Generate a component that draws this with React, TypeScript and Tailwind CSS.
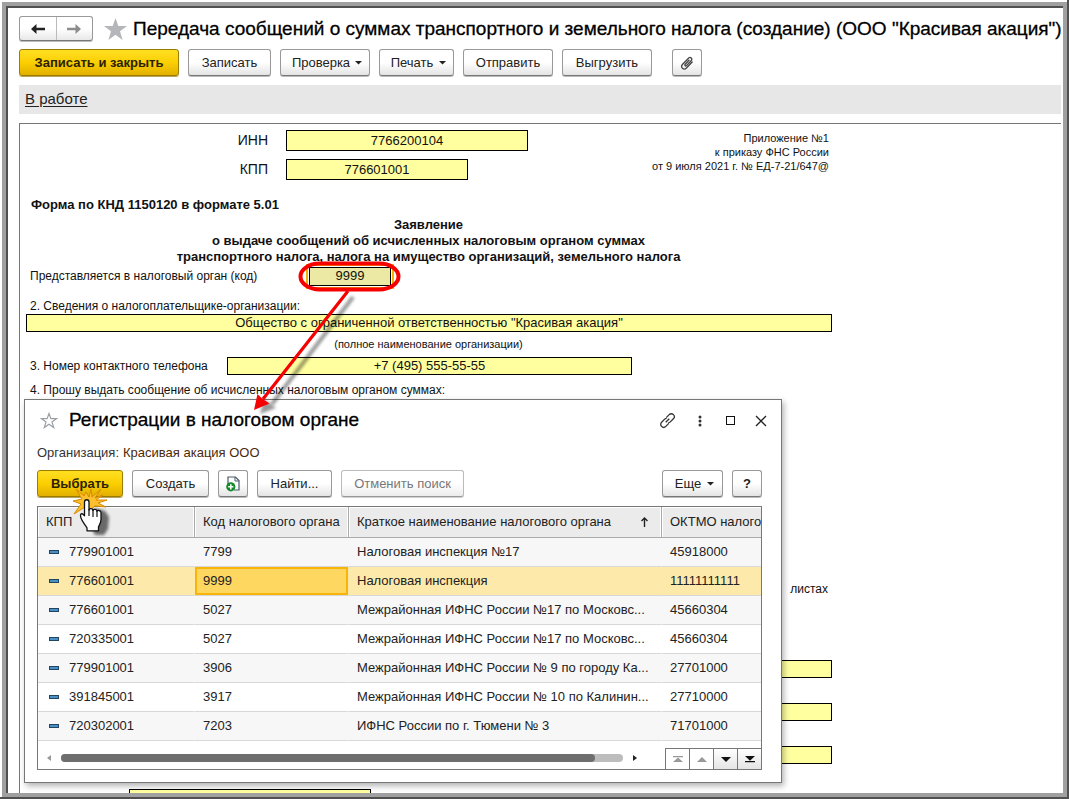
import React from "react";

type Row = { kpp: string; code: string; name: string; oktmo: string };

const rows: Row[] = [
  { kpp: "779901001", code: "7799", name: "Налоговая инспекция №17", oktmo: "45918000" },
  { kpp: "776601001", code: "9999", name: "Налоговая инспекция", oktmo: "11111111111" },
  { kpp: "776601001", code: "5027", name: "Межрайонная ИФНС России №17 по Московс...", oktmo: "45660304" },
  { kpp: "720335001", code: "5027", name: "Межрайонная ИФНС России №17 по Московс...", oktmo: "45660304" },
  { kpp: "779901001", code: "3906", name: "Межрайонная ИФНС России № 9 по городу Ка...", oktmo: "27701000" },
  { kpp: "391845001", code: "3917", name: "Межрайонная ИФНС России № 10 по Калинин...", oktmo: "27710000" },
  { kpp: "720302001", code: "7203", name: "ИФНС России по г. Тюмени № 3", oktmo: "71701000" },
];

const SELECTED = 1;

const buttonBase =
  "flex h-[27px] shrink-0 items-center justify-center whitespace-nowrap rounded-[3px] border text-[13px] ";
const plain =
  "border-[#999] border-b-[#777] bg-linear-to-b from-white from-50% to-[#e4e4e4] text-[#222] shadow-[0_1px_0_#bbb] ";
const primary =
  "border-[#9a7d00] bg-linear-to-b from-[#ffdf20] via-[#fbcf00] to-[#e2b000] font-bold text-[#2b2200] shadow-[0_1px_0_#b9a45a] ";

function Caret() {
  return (
    <svg width="7" height="4" viewBox="0 0 7 4" aria-hidden="true">
      <path d="M0 0h7L3.5 3.5z" fill="#222" />
    </svg>
  );
}

function Btn({
  className,
  kind = "plain",
  children,
  label,
  disabled,
}: {
  className: string;
  kind?: "plain" | "primary" | "disabled";
  children: React.ReactNode;
  label?: string;
  disabled?: boolean;
}) {
  const look =
    kind === "primary"
      ? primary
      : kind === "disabled"
        ? "border-[#bbb] border-b-[#999] bg-linear-to-b from-white from-50% to-[#ececec] text-[#777] shadow-[0_1px_0_#d0d0d0] "
        : plain;
  return (
    <button type="button" aria-label={label} disabled={disabled} className={buttonBase + look + className}>
      {children}
    </button>
  );
}

const field = "border border-black bg-[#ffffa0] text-center text-[13px] text-[#111] outline-none ";

function Heading() {
  return (
    <header className="flex h-[41px] items-center pl-[11px]">
      <div className="flex h-[25px] w-[74px] shrink-0 rounded-[3px] border border-[#999] border-b-[#777] bg-linear-to-b from-white from-50% to-[#e8e8e8] shadow-[0_1px_0_#bbb]">
        <button type="button" aria-label="Назад" className="flex flex-1 items-center justify-center border-r border-[#bbb]">
          <svg width="14" height="12" viewBox="0 0 14 12">
            <path d="M0 6 5.500 1v3.500L4 6l1.500 1.500V11zM3 4.800h11v2.400H3z" fill="#222" />
          </svg>
        </button>
        <button type="button" aria-label="Вперёд" className="flex flex-1 items-center justify-center">
          <svg width="14" height="12" viewBox="0 0 14 12">
            <path d="M14 6 8.500 1v3.500L10 6 8.500 7.500V11zM11 4.800H0v2.400h11z" fill="#8c8c8c" />
          </svg>
        </button>
      </div>
      <button type="button" aria-label="В избранное" className="ml-[11px] shrink-0">
        <svg width="23" height="22" viewBox="0 0 23 22">
          <path d="M11.500 0l2.800 8H23l-7 5.200L18.600 22l-7.100-5.300L4.400 22 7 13.200 0 8h8.700z" fill="#b4b6b9" />
        </svg>
      </button>
      <h1 className="ml-[6px] whitespace-nowrap text-[19px] leading-6 text-black [-webkit-text-stroke:0.3px_#000]">
        Передача сообщений о суммах транспортного и земельного налога (создание) (ООО "Красивая акация")
      </h1>
    </header>
  );
}

function Toolbar() {
  return (
    <div className="flex h-[35px] items-start gap-[9px] pl-[11px]">
      <Btn kind="primary" className="w-[160px]">Записать и закрыть</Btn>
      <Btn className="w-[83px]">Записать</Btn>
      <Btn className="w-[90px] gap-[5px] pl-1">Проверка <Caret /></Btn>
      <Btn className="w-[75px] gap-[6px] pl-1">Печать <Caret /></Btn>
      <Btn className="w-[90px]">Отправить</Btn>
      <Btn className="w-[90px]">Выгрузить</Btn>
      <Btn className="ml-[11px] w-[30px]" label="Прикреплённые файлы">
        <svg width="14" height="14" viewBox="0 0 14 14" fill="none" stroke="#444" strokeWidth="1.300" strokeLinecap="round">
          <path d="M9 4.200 5.200 8.300c-.9 1 .4 2.200 1.300 1.300l4.600-4.900c1.800-2-.7-4.400-2.600-2.500L2.600 8.300c-2.600 2.900 1 6.500 3.900 3.700l5.700-6" />
        </svg>
      </Btn>
    </div>
  );
}

function Sheet() {
  return (
    <section className="ml-[11px] mr-[2px] mt-[9px] min-h-0 flex-1 overflow-hidden border-l border-t border-[#777] text-[12px] text-[#111]">
      <div className="w-[812px]">
        <div className="flex h-[70px] justify-between pt-[6px]">
          <div className="flex flex-col gap-2">
            <div className="flex items-center">
              <label htmlFor="inn" className="w-[266px] pr-[18px] text-right text-[14px]">ИНН</label>
              <input id="inn" className={field + "h-[21px] w-[242px]"} defaultValue="7766200104" />
            </div>
            <div className="flex items-center">
              <label htmlFor="kpp" className="w-[266px] pr-[18px] text-right text-[14px]">КПП</label>
              <input id="kpp" className={field + "h-[21px] w-[182px]"} defaultValue="776601001" />
            </div>
          </div>
          <p className="pr-[3px] pt-px text-right text-[11px] leading-[14px]">
            Приложение №1<br />к приказу ФНС России<br />от 9 июля 2021 г. № ЕД-7-21/647@
          </p>
        </div>
        <p className="pl-[11px] pt-[3px] text-[13px] font-bold leading-4">Форма по КНД 1150120 в формате 5.01</p>
        <h2 className="pl-[5px] pt-1 text-center text-[13px] font-bold leading-4">
          Заявление<br />о выдаче сообщений об исчисленных налоговым органом суммах<br />
          транспортного налога, налога на имущество организаций, земельного налога
        </h2>
        <div className="flex h-[22px] items-center pl-[10px]">
          <label htmlFor="code" className="w-[276px]">Представляется в налоговый орган (код)</label>
          <span className="flex border-2 border-[#f7b100] p-px">
            <input id="code" className="h-[19px] w-[82px] border border-black bg-[#ebe9a4] text-center text-[13px] outline-none" defaultValue="9999" />
          </span>
        </div>
        <div className="flex h-[27px] items-end pl-[10px]">
          <label htmlFor="org" className="leading-4">2. Сведения о налогоплательщике-организации:</label>
        </div>
        <div className="pl-[6px]">
          <input id="org" className={field + "block h-[18px] w-full"} defaultValue={'Общество с ограниченной ответственностью "Красивая акация"'} />
        </div>
        <p className="py-1 pl-[5px] text-center text-[11px] leading-4">(полное наименование организации)</p>
        <div className="flex h-5 items-center pl-[10px]">
          <label htmlFor="phone" className="w-[197px]">3. Номер контактного телефона</label>
          <input id="phone" className={field + "h-[18px] w-[405px]"} defaultValue="+7 (495) 555-55-55" />
        </div>
        <p className="pl-[10px] pt-[6px] leading-4">4. Прошу выдать сообщение об исчисленных налоговым органом суммах:</p>
        <p className="mt-[183px] pr-1 text-right leading-4">листах</p>
        <div className="mt-[63px] flex flex-col gap-[25px]">
          <input aria-label="Фамилия" className={field + "h-[18px] w-[242px] self-end"} />
          <input aria-label="Имя" className={field + "h-[18px] w-[242px] self-end"} />
          <input aria-label="Отчество" className={field + "h-[18px] w-[242px] self-end"} />
          <input aria-label="Дата" className={field + "ml-[109px] h-[18px] w-[242px]"} />
        </div>
      </div>
    </section>
  );
}

const th = "border-b border-r border-[#aaa] px-2 text-left font-normal shadow-[inset_1px_1px_0_#fff,inset_-1px_0_0_#fff]";

function RegistryTable() {
  return (
    <div className="mt-[9px] border border-[#777]">
      <div className="overflow-hidden">
        <table className="w-[760px] table-fixed border-separate border-spacing-0 text-[13px] text-[#222]">
          <colgroup>
            <col className="w-[157px]" />
            <col className="w-[154px]" />
            <col className="w-[313px]" />
            <col />
          </colgroup>
          <thead className="bg-[#ebebeb]">
            <tr className="h-[31px] whitespace-nowrap">
              <th className={th}>КПП</th>
              <th className={th}>Код налогового органа</th>
              <th className={th}>
                <span className="flex items-center justify-between pr-1">
                  Краткое наименование налогового органа
                  <svg width="9" height="10" viewBox="0 0 9 10" aria-label="По возрастанию">
                    <path d="M4.500 10V1M1.500 4l3-3 3 3" fill="none" stroke="#222" strokeWidth="1.400" />
                  </svg>
                </span>
              </th>
              <th className={th}>ОКТМО налого</th>
            </tr>
          </thead>
          <tbody>
            {rows.map((r, i) => {
              const sel = i === SELECTED;
              const cell = "truncate border-b border-r border-b-[#d8d8d8] border-r-transparent px-2 ";
              return (
                <tr
                  key={i}
                  className={"h-[29px] " + (sel ? "bg-[#fdeaab]" : i % 2 === 0 ? "bg-[#f7f7f7]" : "bg-white")}
                >
                  <td className={cell}>
                    <span className="flex items-center gap-[10px] pl-[3px]">
                      <svg width="10" height="4" viewBox="0 0 10 4" aria-hidden="true">
                        <rect x=".5" y=".5" width="9" height="3" fill="#4a90c4" stroke="#1f4560" />
                      </svg>
                      {r.kpp}
                    </span>
                  </td>
                  <td className={cell + (sel ? "bg-[#fdd75f] bg-clip-padding shadow-[inset_0_0_0_2px_#f8b408]" : "")}>{r.code}</td>
                  <td className={cell}>{r.name}</td>
                  <td className={cell}>{r.oktmo}</td>
                </tr>
              );
            })}
          </tbody>
        </table>
      </div>
      <div className="flex h-[28px]">
        <div className="flex flex-1 items-center pt-[6px]">
          <button type="button" aria-label="Влево" className="w-[23px] pl-[9px]">
            <svg width="4" height="6" viewBox="0 0 4 6"><path d="M4 0v6L0 3z" fill="#999" /></svg>
          </button>
          <div className="h-2 flex-1 rounded-full bg-[#bdbdbd]">
            <div className="h-2 w-[95%] rounded-full bg-[#6e6e6e]" />
          </div>
          <button type="button" aria-label="Вправо" className="w-[42px] pl-[10px]">
            <svg width="4" height="6" viewBox="0 0 4 6"><path d="M0 0v6l4-3z" fill="#222" /></svg>
          </button>
        </div>
        <div className="flex h-[21px] self-end border-t border-[#777]">
          {[
            { label: "В начало", d: "M0 0h10v1.200H0zM5 1.500l5 4.500H0z", on: false },
            { label: "Вверх", d: "M5 1l5 5H0z", on: false },
            { label: "Вниз", d: "M0 1h10L5 6z", on: true },
            { label: "В конец", d: "M0 0h10L5 4.800zM0 5h10v1.200H0z", on: true },
          ].map((n) => (
            <button
              key={n.label}
              type="button"
              aria-label={n.label}
              className={"flex w-6 items-center justify-center border-l border-[#777] " + (n.on ? "bg-linear-to-b from-white to-[#e4e4e4]" : "bg-white")}
            >
              <svg width="10" height="7" viewBox="0 0 10 7"><path d={n.d} fill={n.on ? "#111" : "#999"} /></svg>
            </button>
          ))}
        </div>
      </div>
    </div>
  );
}

function RegistryDialog() {
  return (
    <div
      role="dialog"
      aria-labelledby="dialog-title"
      className="absolute left-[24px] top-[399px] w-[758px] border border-[#777] bg-white pb-3 shadow-[2px_3px_6px_rgba(0,0,0,0.3)]"
    >
      <div className="flex h-[41px] items-center pl-[15px] pr-[14px]">
        <button type="button" aria-label="В избранное">
          <svg width="18" height="17" viewBox="0 0 18 17">
            <path d="M9 1.500l1.900 5.200h5.500L12 10l1.700 5.600L9 12.300l-4.700 3.300L6 10 1.600 6.700h5.500z" fill="none" stroke="#9aa0a6" strokeWidth="1.200" />
          </svg>
        </button>
        <h2 id="dialog-title" className="ml-[11px] flex-1 text-[19px] text-black [-webkit-text-stroke:0.3px_#000]">Регистрации в налоговом органе</h2>
        <div className="flex items-center">
          <button type="button" aria-label="Получить ссылку" className="mr-[22px]">
            <svg width="17" height="17" viewBox="0 0 17 17" fill="none" stroke="#333" strokeWidth="1.300">
              <path d="M7.200 5.600 10.200 2.600a2.900 2.900 0 0 1 4.200 4.200L11.300 9.900a2.500 2.500 0 0 1-2 .7M9.800 11.400 6.800 14.400a2.900 2.900 0 0 1-4.200-4.200L5.700 7.100a2.500 2.500 0 0 1 2-.7M6.700 10.300l3.600-3.600" />
            </svg>
          </button>
          <button type="button" aria-label="Меню" className="mr-[24px]">
            <svg width="4" height="12" viewBox="0 0 4 12" fill="#333">
              <circle cx="2" cy="2" r="1.500" /><circle cx="2" cy="6" r="1.500" /><circle cx="2" cy="10" r="1.500" />
            </svg>
          </button>
          <button type="button" aria-label="Развернуть" className="mr-[20px]">
            <svg width="9" height="9" viewBox="0 0 9 9"><rect x=".5" y=".5" width="8" height="8" fill="none" stroke="#111" /></svg>
          </button>
          <button type="button" aria-label="Закрыть">
            <svg width="12" height="12" viewBox="0 0 12 12"><path d="M1 1l10 10M11 1L1 11" stroke="#222" strokeWidth="1.300" /></svg>
          </button>
        </div>
      </div>
      <div className="pl-3 pr-[19px]">
        <p className="flex h-[29px] items-start gap-1 pt-[2px] text-[13px] text-[#333]">
          Организация: <a href="#org" className="text-[#4a2a08]">Красивая акация ООО</a>
        </p>
        <div className="flex gap-[9px]">
          <Btn kind="primary" className="w-[86px]">Выбрать</Btn>
          <Btn className="w-[77px]">Создать</Btn>
          <Btn className="w-[30px]" label="Создать копированием">
            <svg width="14" height="16" viewBox="0 0 14 16">
              <path d="M2 8V1h7.500L13 4.500V14H8" fill="#fff" stroke="#4a5a68" strokeWidth="1.200" />
              <path d="M9 1v4h4" fill="none" stroke="#4a5a68" />
              <circle cx="4.800" cy="10.800" r="4.600" fill="#148a28" />
              <path d="M4.800 8.200v5.200M2.200 10.800h5.200" stroke="#fff" strokeWidth="1.600" />
            </svg>
          </Btn>
          <Btn className="w-[75px]">Найти...</Btn>
          <Btn kind="disabled" disabled className="w-[123px]">Отменить поиск</Btn>
          <Btn className="ml-auto w-[61px] gap-[6px] pl-1">Еще <Caret /></Btn>
          <Btn className="w-[30px] font-bold">?</Btn>
        </div>
        <RegistryTable />
      </div>
    </div>
  );
}

function Annotations() {
  return (
    <svg className="pointer-events-none absolute left-0 top-0" width="500" height="560" viewBox="0 0 500 560" aria-hidden="true">
      <defs>
        <filter id="soft" x="-20%" y="-20%" width="150%" height="150%">
          <feGaussianBlur stdDeviation="1.500" />
        </filter>
      </defs>
      <g filter="url(#soft)" opacity=".4">
        <path d="M353 297 272 404" stroke="#000" strokeWidth="4" />
        <path d="M260 414l4-15 12 9z" />
      </g>
      <rect x="300.500" y="263.500" width="98" height="26" rx="19" ry="13" fill="none" stroke="#f60000" strokeWidth="4" />
      <path d="M348 291 263 399" stroke="#f60000" strokeWidth="3.200" />
      <path d="M254 410l3.500-16 4.500 4.500 7.500 5z" fill="#f60000" />
      <path
        d="M73 501l9-2-6-10 8 7 2-4 3 5 2-8 1 8 9-8-6 9 8-3-7 5 11 0-9 3 8 4-11-1-5 4-5-3-11 7 7-10z"
        fill="#fbc02d"
        stroke="#d98a00"
      />
      <path d="M90 505l10 3 4 6-1 12-4 6H90l-7-14z" filter="url(#soft)" opacity=".55" transform="translate(5 3)" />
      <path
        d="M84.500 502c0-3 4.500-3 4.500 0v8c0-2 4-2 4 .5 0-1.500 4-1.500 4 .8 0-1.300 4-1.300 4 1.500v7c0 3-1.500 5-2.500 7v4H87v-3c-3-4-6.500-9-6.500-12 0-3 2.500-2.500 4 0z"
        fill="#fff"
        stroke="#111"
        strokeWidth="1.300"
        strokeLinejoin="round"
      />
      <path d="M89 509v7M93 510v7M97 511v6" stroke="#111" strokeWidth="1.200" />
    </svg>
  );
}

export default function App() {
  return (
    <div className="relative h-screen overflow-hidden border-b-2 border-r-2 border-[#505050] bg-white pl-[2px] pt-[2px] font-['Liberation_Sans',Arial,sans-serif]">
      <div className="h-full border-4 border-[#a0a0a0]">
        <main className="flex h-full flex-col border-l-2 border-t-2 border-[#505050] bg-white">
          <Heading />
          <Toolbar />
          <div className="ml-[11px] mr-[2px] mt-px flex h-[29px] shrink-0 items-center bg-[#e7e7e7] pl-[6px]">
            <a href="#status" className="text-[15px] text-[#222] underline underline-offset-2">В работе</a>
          </div>
          <Sheet />
        </main>
      </div>
      <RegistryDialog />
      <Annotations />
    </div>
  );
}
